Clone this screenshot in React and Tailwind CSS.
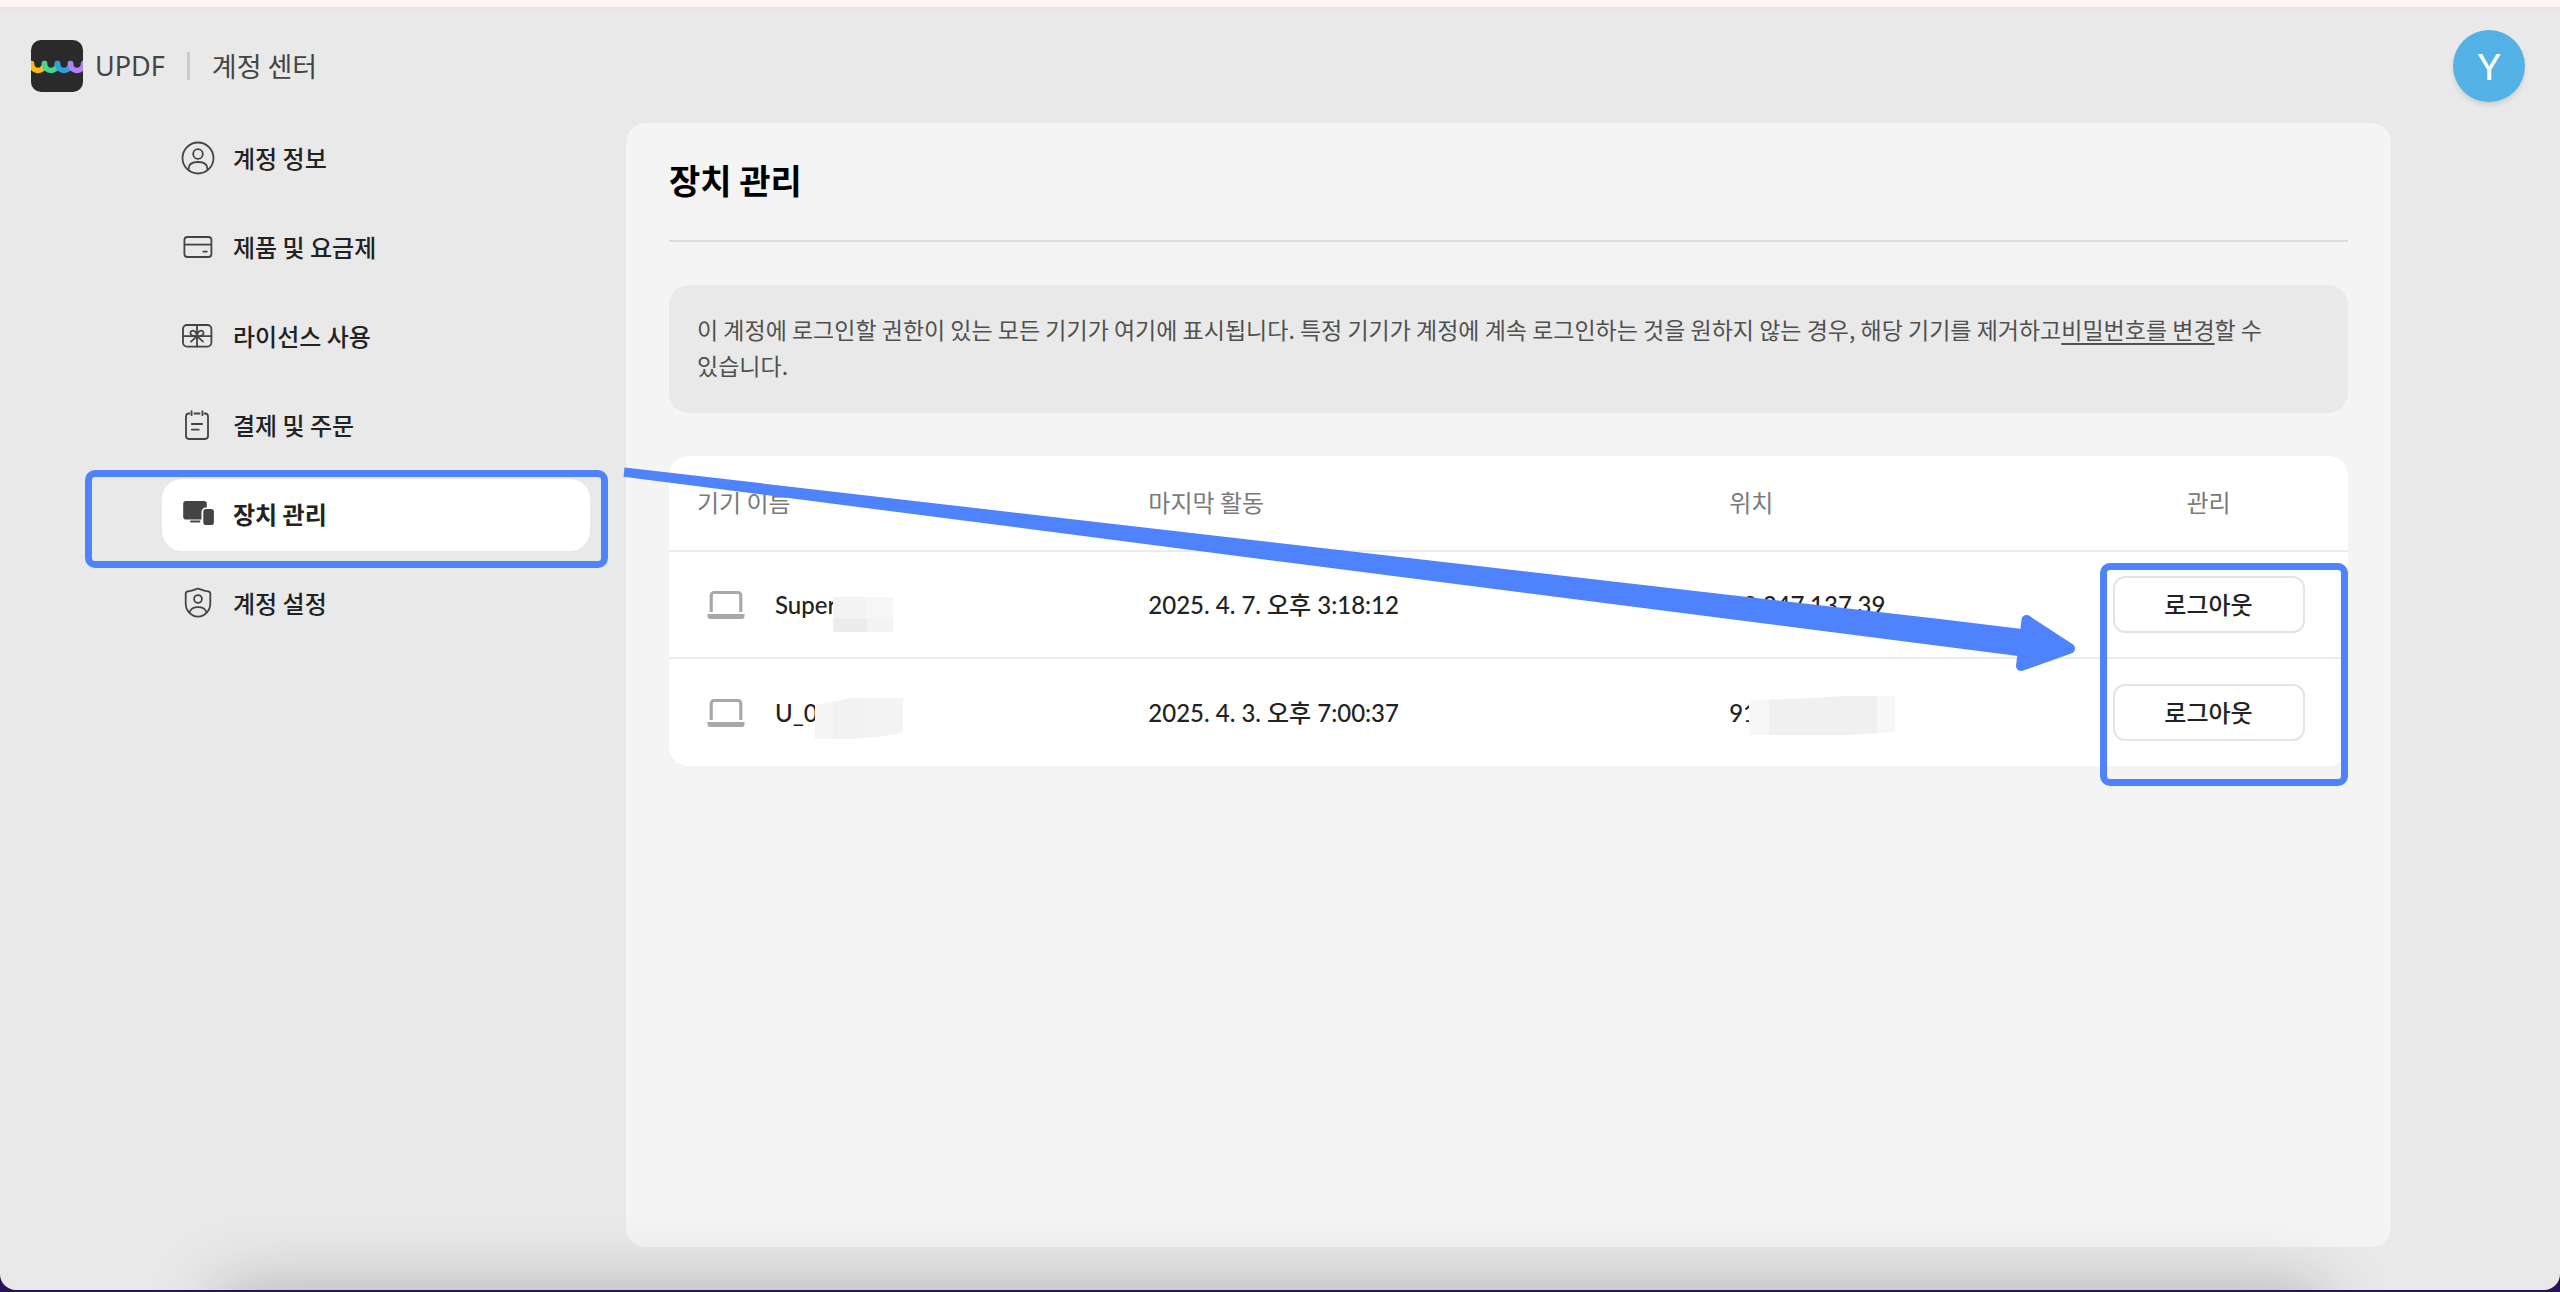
const svgProps = {
  viewBox: '0 0 36 36',
  fill: 'none',
  stroke: '#444',
  strokeWidth: 1.8,
  strokeLinecap: 'round',
  strokeLinejoin: 'round',
  className: 'h-9 w-9 shrink-0',
  'aria-hidden': true,
}

const UserIcon = () => (
  <svg {...svgProps}>
    <circle cx="18" cy="18" r="15.5" />
    <circle cx="18" cy="14" r="4.8" />
    <path d="M8.6 30v-1.2c0-4 3.2-6.8 9.4-6.8s9.4 2.8 9.4 6.8V30" />
  </svg>
)

const CardIcon = () => (
  <svg {...svgProps}>
    <rect x="4.4" y="8" width="27" height="20" rx="3" />
    <path d="M4.4 15.6h27" strokeLinecap="butt" />
    <path d="M23.4 22.6h3.4" />
  </svg>
)

const GiftIcon = () => (
  <svg {...svgProps}>
    <rect x="3" y="7" width="28.4" height="21.6" rx="4" />
    <path d="M3 18.2h28.4M17 7v21.6" />
    <path d="M17 18.2c-3.600.4-6.600-1-6.600-3.200 0-1.800 1.600-2.700 3.200-2.200 2.200.7 3.200 3 3.400 5.400ZM17 18.200c3.600.4 6.600-1 6.600-3.200 0-1.800-1.600-2.700-3.200-2.200-2.200.7-3.200 3-3.400 5.400ZM17 18.200l-6 5.400M17 18.200l6 5.400" />
  </svg>
)

const OrderIcon = () => (
  <svg {...svgProps}>
    <path d="M9.500 6.500h-.6A2.900 2.900 0 0 0 6 9.400v19.700A2.900 2.900 0 0 0 8.900 32h16.200a2.900 2.900 0 0 0 2.900-2.900V9.400a2.900 2.900 0 0 0-2.900-2.900h-.6M11.600 4.200v4M22.400 4.200v4M14.500 6.500h5" />
    <path d="M11.800 17h10.400M11.800 22.600h7" />
  </svg>
)

const DeviceIcon = () => (
  <svg {...svgProps} stroke="none" fill="#444">
    <path d="M6 5h18a2.800 2.800 0 0 1 2.800 2.800v3.600H26a4.500 4.500 0 0 0-4.500 4.500V23.500H6A2.800 2.800 0 0 1 3.200 20.700V7.800A2.800 2.800 0 0 1 6 5Z" />
    <rect x="10" y="24.600" width="10.400" height="2" rx="1" />
    <rect x="23.300" y="13" width="10.600" height="16" rx="2.800" />
  </svg>
)

const ShieldIcon = () => (
  <svg {...svgProps}>
    <path d="M18 3.600c2 0 3.600 1.900 10 2.700 1.500.2 2.300 1 2.300 2.500v9.400c0 7.400-5.400 13.400-12.300 13.400S5.700 25.600 5.700 18.200V8.800c0-1.500.8-2.300 2.300-2.500 6.400-.8 8-2.700 10-2.700Z" />
    <circle cx="18" cy="14" r="3.900" />
    <path d="M9.800 26.800c1-2.800 4-4.600 8.200-4.600s7.200 1.800 8.200 4.600" />
  </svg>
)

const LaptopIcon = () => (
  <svg viewBox="0 0 38 30" className="h-[30px] w-[38px] shrink-0" aria-hidden>
    <path d="M4.200 22V5.500a3 3 0 0 1 3-3h23.600a3 3 0 0 1 3 3V22" fill="none" stroke="#a8a8a8" strokeWidth="3.200" />
    <path d="M.5 24h37v2a3 3 0 0 1-3 3h-31a3 3 0 0 1-3-3Z" fill="#a8a8a8" />
  </svg>
)

const Logo = () => (
  <svg viewBox="0 0 52 52" className="h-[52px] w-[52px] shrink-0" aria-hidden>
    <defs>
      <clipPath id="logo-tile">
        <rect width="52" height="52" rx="10" />
      </clipPath>
    </defs>
    <g clipPath="url(#logo-tile)">
      <rect width="52" height="52" fill="#2a2a2a" />
      <g fill="none" strokeWidth="5.500" strokeLinecap="round">
        <path d="M.5 23.500c0 9.200 13 9.200 13 0" stroke="#fdbc14" />
        <path d="M13.500 23.500c0 9.200 13 9.200 13 0" stroke="#43d68c" />
        <path d="M26.500 23.500c0 9.200 13 9.200 13 0" stroke="#2f9fdd" />
        <path d="M39.500 23.500c0 9.200 13 9.200 13 0" stroke="#b282f5" />
      </g>
    </g>
  </svg>
)

const navItems = [
  { label: '계정 정보', Icon: UserIcon },
  { label: '제품 및 요금제', Icon: CardIcon },
  { label: '라이선스 사용', Icon: GiftIcon },
  { label: '결제 및 주문', Icon: OrderIcon },
  { label: '장치 관리', Icon: DeviceIcon, active: true },
  { label: '계정 설정', Icon: ShieldIcon },
]

const NameMask1 = () => (
  <svg viewBox="0 0 60 35" className="absolute top-2 left-[58px] h-[35px] w-[60px]" aria-hidden>
    <rect width="60" height="35" fill="#f6f6f6" />
    <rect width="34" height="22" fill="#f3f3f3" />
    <rect y="22" width="34" height="13" fill="#ececec" />
    <rect x="34" y="22" width="26" height="13" fill="#f3f3f3" />
  </svg>
)

const NameMask2 = () => (
  <svg viewBox="0 0 88 43" className="absolute top-0 left-10 h-[43px] w-[88px]" aria-hidden>
    <path d="M0 8 22 4 34 1H88V36L60 40 40 42H0Z" fill="#f2f2f2" />
    <path d="M0 8 18 5V42H0Z" fill="#f5f5f5" />
    <path d="M48 1H88V36L60 40 48 41Z" fill="#f4f4f4" />
  </svg>
)

const LocationMask = () => (
  <svg viewBox="0 0 146 39" className="absolute -top-0.5 left-5 h-[39px] w-[146px]" aria-hidden>
    <path d="M0 4 66 2 96 0H146V36L128 37 100 39H0Z" fill="#f7f7f7" />
    <path d="M20 4 66 2 96 0H128V37L100 39H20Z" fill="#f0f0f0" />
  </svg>
)

const devices = [
  { name: 'Super', NameMask: NameMask1, time: '2025. 4. 7. 오후 3:18:12', location: '98.247.137.39' },
  { name: 'U_0', NameMask: NameMask2, time: '2025. 4. 3. 오후 7:00:37', location: '91', LocationMask },
]

function Header() {
  return (
    <header className="flex items-center justify-between pt-[23px] pr-[35px] pb-[21px] pl-[31px] text-[#444]">
      <div className="flex items-center">
        <Logo />
        <span className="ml-3 font-['Noto_Sans','Noto_Sans_CJK_KR',sans-serif] text-[27px] leading-9">UPDF</span>
        <span className="mx-[22px] h-7 w-[3px] bg-[#cbcbcb]" />
        <span className="text-[27px] leading-9">계정 센터</span>
      </div>
      <button
        type="button"
        aria-label="Y 계정"
        className="flex h-[72px] w-[72px] items-center justify-center rounded-full bg-[#54b1e6] font-[Lato,sans-serif] text-4xl font-medium text-white shadow-md"
      >
        Y
      </button>
    </header>
  )
}

function Sidebar() {
  return (
    <nav className="ml-[162px] flex w-[428px] shrink-0 flex-col gap-[17px]">
      {navItems.map(({ label, Icon, active }) => (
        <div key={label} className="relative">
          <a
            href="#"
            aria-current={active ? 'page' : undefined}
            className={
              active
                ? 'flex h-[72px] items-center gap-[17px] rounded-[20px] bg-white pb-0.5 pl-[18px] text-2xl font-bold text-[#222]'
                : 'flex h-[72px] items-center gap-[17px] rounded-[20px] pb-0.5 pl-[18px] text-2xl font-medium text-[#222]'
            }
          >
            <Icon />
            {label}
          </a>
          {active && (
            <div className="pointer-events-none absolute -top-[9px] -right-[18px] -bottom-[17px] -left-[77px] rounded-[10px] border-[7px] border-[#4e83fd]" />
          )}
        </div>
      ))}
    </nav>
  )
}

function Arrow() {
  return (
    <svg
      viewBox="0 0 1460 220"
      className="pointer-events-none absolute top-0 -left-[49px] h-[220px] w-[1460px]"
      fill="#4e83fd"
      aria-hidden
    >
      <path d="M4.500 11.500 680 89.500 1320 163 1402 173 1398 200 1320 190 680 108 3.500 20.700Z" />
      <path d="M1406.500 164 1450 192.500 1401 210Z" stroke="#4e83fd" strokeWidth="10" strokeLinejoin="round" />
    </svg>
  )
}

function DeviceTable() {
  return (
    <div className="relative mt-[43px]">
      <table className="w-full table-fixed border-separate border-spacing-0 rounded-[20px] bg-white text-left">
        <colgroup>
          <col className="w-[27%]" />
          <col className="w-[34%]" />
          <col />
          <col className="w-[279px]" />
        </colgroup>
        <thead>
          <tr className="h-[96px] text-2xl text-[#7a7a7a]">
            <th className="border-b-2 border-[#ececec] pb-0.5 pl-7 font-normal">기기 이름</th>
            <th className="border-b-2 border-[#ececec] pb-0.5 pl-[26px] font-normal">마지막 활동</th>
            <th className="border-b-2 border-[#ececec] pb-0.5 pl-9 font-normal">위치</th>
            <th className="border-b-2 border-[#ececec] pb-0.5 text-center font-normal">관리</th>
          </tr>
        </thead>
        <tbody className="font-[Lato,'Noto_Sans_CJK_KR',sans-serif] text-2xl font-medium text-[#222] [&>tr:first-child>td]:border-b-2 [&>tr:first-child>td]:border-[#ececec]">
          {devices.map(({ name, NameMask, time, location, LocationMask: Mask }) => (
            <tr key={name} className="h-[107px]">
              <td className="pl-[38px]">
                <div className="flex items-center gap-[30px]">
                  <LaptopIcon />
                  <span className="relative">
                    {name}
                    <NameMask />
                  </span>
                </div>
              </td>
              <td className="pl-[26px]">{time}</td>
              <td className="pl-9">
                <span className="relative">
                  {location}
                  {Mask && <Mask />}
                </span>
              </td>
              <td className="text-center">
                <button
                  type="button"
                  className="h-[57px] w-48 rounded-xl border-2 border-[#e4e4e8] bg-white pb-0.5 font-['Noto_Sans_CJK_KR',sans-serif] text-2xl font-medium text-[#222]"
                >
                  로그아웃
                </button>
              </td>
            </tr>
          ))}
        </tbody>
      </table>
      <Arrow />
      <div className="pointer-events-none absolute top-[107px] right-0 -bottom-5 w-[248px] rounded-[10px] border-[7px] border-[#4e83fd]" />
    </div>
  )
}

export default function App() {
  return (
    <div className="flex min-h-screen flex-col bg-[#2a1259] pb-0.5 font-['Noto_Sans_CJK_KR',sans-serif]">
      <div className="relative flex grow flex-col overflow-hidden rounded-b-2xl bg-[#e9e9e9]">
        <div className="h-[7px] bg-[#fff5f2] shadow-[0_2px_4px_#ecdede]" />
        <Header />
        <div className="flex grow pb-[43px]">
          <Sidebar />
          <main className="mr-[169px] ml-9 grow rounded-[20px] bg-[#f4f4f4] px-[43px]">
            <h1 className="border-b-2 border-[#dcdcdc] pt-8 pb-[35px] text-[34px] leading-[50px] font-bold text-black">
              장치 관리
            </h1>
            <p className="mt-[43px] rounded-[20px] bg-[#e9e9e9] px-7 pt-[26px] pb-[30px] text-[23px] leading-9 break-keep text-[#505050]">
              <span>이 계정에 로그인할 권한이 있는 모든 기기가 여기에 표시됩니다. 특정 기기가 계정에 계속 로그인하는 것을 원하지 않는 경우, 해당 기기를 제거하고</span>
              <a href="#" className="underline decoration-2 underline-offset-4">비밀번호를 변경</a>
              <span>할 수</span> <span>있습니다.</span>
            </p>
            <DeviceTable />
          </main>
        </div>
        <div className="pointer-events-none absolute top-full right-[240px] left-[220px] h-50 shadow-[0_0_70px_rgba(0,0,0,0.26)]" />
      </div>
    </div>
  )
}
